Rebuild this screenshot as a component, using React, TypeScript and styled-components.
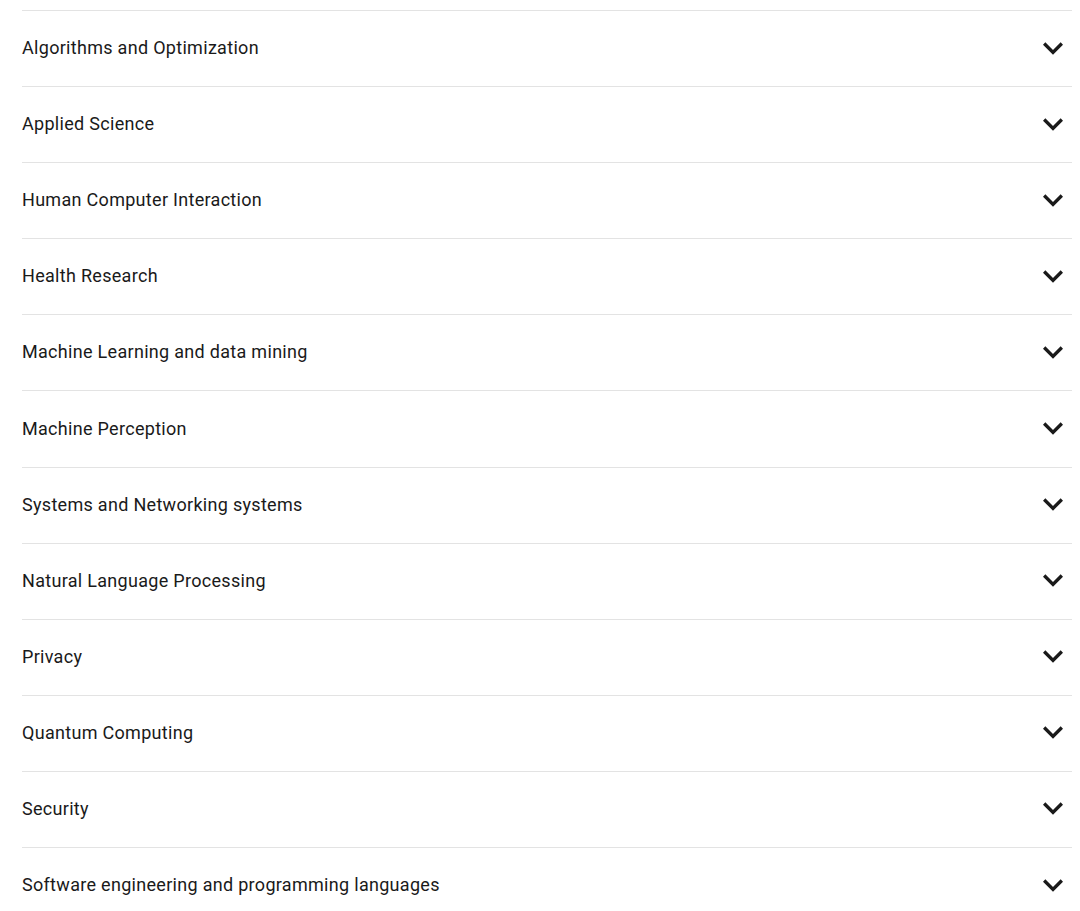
import styled, { createGlobalStyle } from "styled-components";

const GlobalStyle = createGlobalStyle`
  html, body {
    margin: 0;
    padding: 0;
    background: #ffffff;
    font-family: Roboto, "Noto Sans", Arial, sans-serif;
    overflow: hidden;
  }
`;

// list of research areas
const Page = styled.div`
  padding: 10px 8px 0 22px;
`;

const List = styled.ul`
  list-style: none;
  margin: 0;
  padding: 0;
`;

const Row = styled.li`
  border-top: 1px solid #e3e3e3;
`;

const Header = styled.button`
  box-sizing: border-box;
  display: flex;
  align-items: center;
  justify-content: space-between;
  width: 100%;
  height: 75.1px;
  padding: 0 0 2px;
  border: none;
  background: transparent;
  cursor: pointer;
  text-align: left;
`;

const Title = styled.span`
  font-family: Roboto, "Noto Sans", Arial, sans-serif;
  font-size: 18px;
  font-weight: 400;
  color: #1a1a1a;
  letter-spacing: 0.3px;
`;

const Chevron = styled.svg`
  width: 40px;
  height: 40px;
  flex-shrink: 0;
  margin-right: -1px;
  fill: #1a1a1a;
`;

const areas = [
  "Algorithms and Optimization",
  "Applied Science",
  "Human Computer Interaction",
  "Health Research",
  "Machine Learning and data mining",
  "Machine Perception",
  "Systems and Networking systems",
  "Natural Language Processing",
  "Privacy",
  "Quantum Computing",
  "Security",
  "Software engineering and programming languages",
];

const App = () => {
  return (
    <>
      <GlobalStyle />
      <Page>
        <List>
          {areas.map((area) => (
            <Row key={area}>
              <Header type="button" aria-expanded={false}>
                <Title>{area}</Title>
                <Chevron viewBox="0 0 24 24" aria-hidden="true">
                  <path d="M16.59 8.59L12 13.17 7.41 8.59 6 10l6 6 6-6z" />
                </Chevron>
              </Header>
            </Row>
          ))}
        </List>
      </Page>
    </>
  );
};

export default App;
